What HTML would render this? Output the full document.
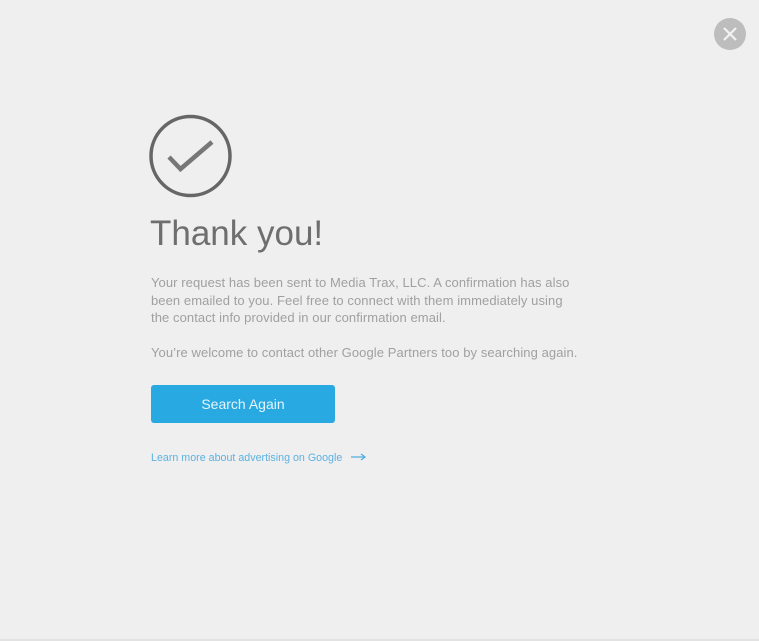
<!DOCTYPE html>
<html><head><style>
html,body{margin:0;padding:0;width:759px;height:641px;background:#efefef;overflow:hidden;font-family:"Liberation Sans",sans-serif;}
.abs{position:absolute;}
h1{position:absolute;left:150px;top:214px;margin:0;font-weight:normal;font-size:35px;color:#6e6e6e;}
.p{position:absolute;left:151px;font-size:13px;line-height:17.5px;color:#a0a0a0;width:425px;letter-spacing:0.08px;}
.btn{position:absolute;left:151px;top:385px;width:184px;height:38px;background:#29a9e1;border-radius:3px;color:#e6f4fb;font-size:14px;text-align:center;line-height:38px;}
.link{position:absolute;left:151px;top:452px;font-size:10.7px;color:#5cb2e2;}
</style></head><body>
<svg class="abs" style="left:0;top:0" width="759" height="641">
<circle cx="190.5" cy="156" r="39.5" fill="none" stroke="#666" stroke-width="3.5"/>
<polyline points="169,157 180.5,169 212,142" fill="none" stroke="#777" stroke-width="4.5"/>
<circle cx="730" cy="34" r="16" fill="#bdbdbd"/>
<path d="M724 28 L736 40 M736 28 L724 40" stroke="#f2f2f2" stroke-width="2.2"/>
<line x1="0" y1="640" x2="759" y2="640" stroke="#d6d6d6"/>
<path d="M351 457 H364 M361 454 L365 457 L361 460" fill="none" stroke="#55aee0" stroke-width="1.3"/>
</svg>
<h1>Thank you!</h1>
<div class="p" style="top:274px">Your request has been sent to Media Trax, LLC. A confirmation has also been emailed to you. Feel free to connect with them immediately using the contact info provided in our confirmation email.</div>
<div class="p" style="top:344px;width:480px">You’re welcome to contact other Google Partners too by searching again.</div>
<div class="btn">Search Again</div>
<div class="link">Learn more about advertising on Google</div>
</body></html>
